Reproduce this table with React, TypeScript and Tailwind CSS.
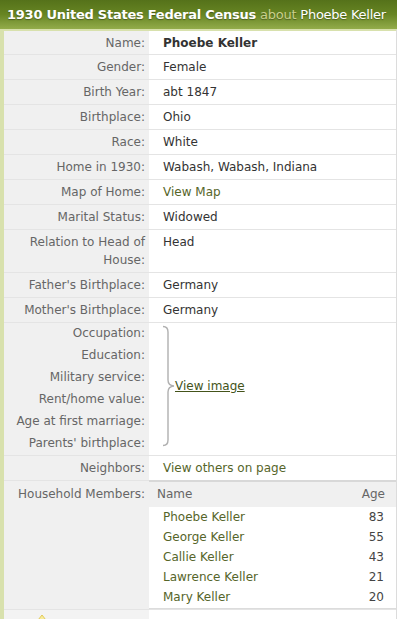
import React from "react";

const rows: { label: string; value: string; link?: boolean }[] = [
  { label: "Gender:", value: "Female" },
  { label: "Birth Year:", value: "abt 1847" },
  { label: "Birthplace:", value: "Ohio" },
  { label: "Race:", value: "White" },
  { label: "Home in 1930:", value: "Wabash, Wabash, Indiana" },
  { label: "Map of Home:", value: "View Map", link: true },
  { label: "Marital Status:", value: "Widowed" },
];

const members = [
  { name: "Phoebe Keller", age: 83 },
  { name: "George Keller", age: 55 },
  { name: "Callie Keller", age: 43 },
  { name: "Lawrence Keller", age: 21 },
  { name: "Mary Keller", age: 20 },
];

const hidden = [
  "Occupation:",
  "Education:",
  "Military service:",
  "Rent/home value:",
  "Age at first marriage:",
  "Parents' birthplace:",
];

const Row = ({
  label,
  children,
  first,
}: {
  label: React.ReactNode;
  children: React.ReactNode;
  first?: boolean;
}) => (
  <div className="flex border-b border-[#e4e4e4]">
    <div
      className={
        "w-[145px] shrink-0 bg-[#f0f0f0] text-right pr-[4px] text-[#666] leading-[18px] " +
        (first ? "pt-[3px] pb-[2px]" : "py-[3px]")
      }
    >
      {label}
    </div>
    <div
      className={
        "flex-1 pl-[14px] leading-[18px] " +
        (first ? "pt-[3px] pb-[2px]" : "py-[3px]")
      }
    >
      {children}
    </div>
  </div>
);

export default function App() {
  return (
    <div className="w-[398px] h-[619px] overflow-hidden bg-white font-['DejaVu_Sans',sans-serif] text-[12px] text-[#333]">
      <div className="w-[397px] h-[29px] bg-linear-to-b from-[#55721a] via-[#678523] to-[#93ac4a] flex items-center pl-[7px] text-[13px] tracking-[-0.25px] text-white [text-shadow:0_1px_1px_rgba(0,0,0,0.35)]">
        <span className="font-bold">1930 United States Federal Census</span>
        <span className="text-[#c9d08c] ml-[4px]">about</span>
        <span className="ml-[4px]">Phoebe Keller</span>
      </div>
      <div className="w-[397px] border-t-2 border-l-4 border-[#d8e1ad] border-r border-r-[#dcdcdc]">
        <Row label="Name:" first>
          <span className="font-bold text-[#333]">Phoebe Keller</span>
        </Row>
        {rows.map((r) => (
          <Row key={r.label} label={r.label}>
            <span className={r.link ? "text-[#56652a]" : ""}>{r.value}</span>
          </Row>
        ))}
        <Row
          label={
            <>
              Relation to Head of
              <br />
              House:
            </>
          }
        >
          Head
        </Row>
        <Row label="Father's Birthplace:">Germany</Row>
        <Row label="Mother's Birthplace:">Germany</Row>

        <div className="flex border-b border-[#e4e4e4]">
          <div className="w-[145px] shrink-0 bg-[#f0f0f0] text-right pr-[4px] text-[#666] pt-px pb-[3px] flex flex-col gap-[4px]">
            {hidden.map((h) => (
              <div key={h} className="leading-[18px]">
                {h}
              </div>
            ))}
          </div>
          <div className="flex-1 flex items-center pl-[13px] pb-[6px]">
            <svg width="14" height="122" viewBox="0 0 14 122" className="shrink-0">
              <path
                d="M1 1.5 Q6 1.5 6 7 L6 55 Q6 60.5 12 61 Q6 61.5 6 67 L6 115 Q6 120.5 1 120.5"
                fill="none"
                stroke="#b0b0b0"
                strokeWidth="1.4"
              />
            </svg>
            <span className="underline text-[#44531a] ml-[-1px]">View image</span>
          </div>
        </div>

        <Row label="Neighbors:">
          <span className="text-[#56652a]">View others on page</span>
        </Row>

        <div className="flex border-b border-[#e4e4e4]">
          <div className="w-[145px] shrink-0 bg-[#f0f0f0] text-right pr-[4px] text-[#666] leading-[18px] pt-[4px] pb-[3px]">
            Household Members:
          </div>
          <div className="flex-1 border-b border-[#dcdcdc]">
            <div className="flex justify-between bg-[#f0f0f0] border-t-2 border-[#d8d8d8] -mt-px pl-[8px] pr-[11px] pt-[3px] pb-[4px] leading-[18px] text-[#666]">
              <span>Name</span>
              <span>Age</span>
            </div>
            <div className="pb-px">
              {members.map((m) => (
                <div
                  key={m.name}
                  className="flex justify-between pl-[14px] pr-[12px] leading-[20px] text-[#56652a]"
                >
                  <span>{m.name}</span>
                  <span className="text-[#444]">{m.age}</span>
                </div>
              ))}
            </div>
          </div>
        </div>

        <div className="flex h-[40px]">
          <div className="w-[145px] shrink-0 bg-[#f3f3f3] pl-[31px] pt-[4px]">
            <svg width="14" height="16" viewBox="0 0 14 16">
              <path
                d="M7 1 L12.5 8 Q13 14 7 15 Q1 14 1.5 8 Z"
                fill="#f8ec9c"
                stroke="#e0c95a"
                strokeWidth="1"
              />
            </svg>
          </div>
          <div className="flex-1" />
        </div>
      </div>
    </div>
  );
}
